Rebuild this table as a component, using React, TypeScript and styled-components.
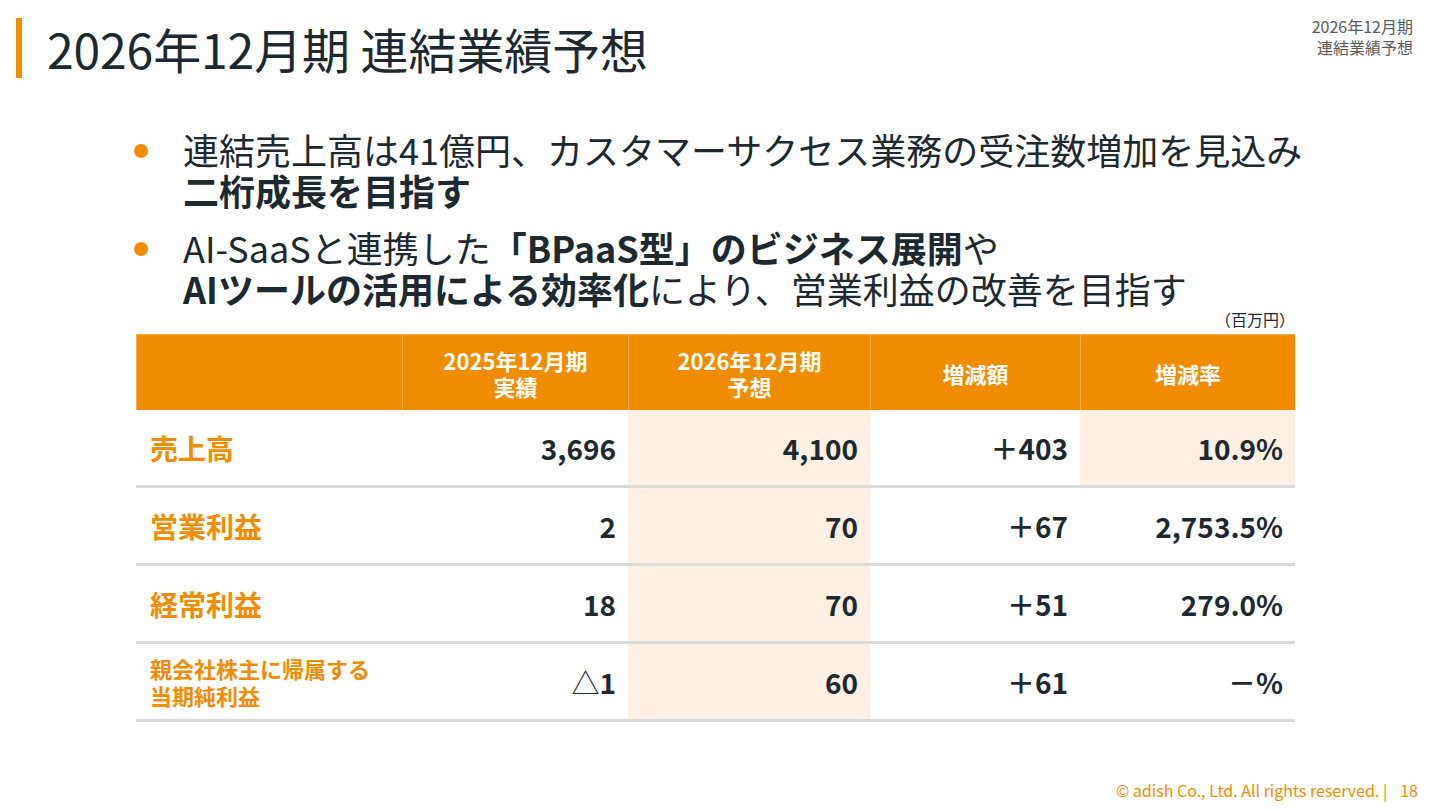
import React from "react";
import styled, { createGlobalStyle } from "styled-components";

const GlobalStyle = createGlobalStyle`
  html, body {
    margin: 0;
    padding: 0;
    background: #ffffff;
  }
  body {
    font-family: "Noto Sans CJK JP", "Noto Sans", sans-serif;
    color: #1d2931;
  }
  * { box-sizing: border-box; }
`;

const ORANGE = "#ef8c00";
const CREAM = "#fdefe1";
const INK = "#1d2931";

const Slide = styled.div`
  width: 1440px;
  height: 810px;
  display: flex;
  flex-direction: column;
  overflow: hidden;
  background: #ffffff;
`;

const Header = styled.header`
  display: flex;
  justify-content: space-between;
  align-items: flex-start;
  padding: 18px 27px 0 16px;
`;

const TitleGroup = styled.div`
  display: flex;
  align-items: center;
  gap: 25px;
`;

const AccentBar = styled.div`
  width: 6px;
  height: 60px;
  background: ${ORANGE};
`;

const Title = styled.h1`
  margin: 0;
  font-size: 48px;
  font-weight: 400;
  line-height: 60px;
  color: ${INK};
  letter-spacing: -0.1px;
`;

const Meta = styled.div`
  font-size: 16px;
  line-height: 21px;
  color: #5a5a5a;
  text-align: right;
  margin-top: -2px;
`;

const Bullets = styled.ul`
  list-style: none;
  margin: 51px 0 0 0;
  padding: 0 0 0 134px;
  display: flex;
  flex-direction: column;
  gap: 16px;
`;

const BulletItem = styled.li`
  display: grid;
  grid-template-columns: 49px 1fr;
  font-size: 36px;
  line-height: 41px;
  color: ${INK};
`;

const Dot = styled.span`
  width: 14px;
  height: 14px;
  border-radius: 50%;
  background: ${ORANGE};
  margin-top: 15px;
`;

const Strong = styled.strong`
  font-weight: 700;
`;

const TableWrap = styled.section`
  width: 1159px;
  margin: 1px 0 0 136px;
  display: flex;
  flex-direction: column;
`;

const Unit = styled.div`
  align-self: flex-end;
  font-size: 16px;
  line-height: 18px;
  color: ${INK};
  padding-right: 0;
  margin-bottom: 6px;
`;

const Grid = styled.div`
  display: grid;
  grid-template-columns: 266px 226px 242px 210px 215px;
`;

const HeadCell = styled.div`
  height: 76px;
  background: ${ORANGE};
  color: #ffffff;
  font-weight: 700;
  font-size: 22px;
  line-height: 26px;
  display: flex;
  align-items: center;
  justify-content: center;
  text-align: center;
  border-left: 1px solid rgba(255, 255, 255, 0.3);
  border-top: 1px solid rgba(255, 255, 255, 0.3);
`;

const LabelCell = styled.div<{ $small?: boolean }>`
  height: 78px;
  border-bottom: 3px solid #dadada;
  display: flex;
  align-items: center;
  padding: 0 14px;
  color: ${ORANGE};
  font-weight: 700;
  font-size: ${(p) => (p.$small ? "22px" : "28px")};
  line-height: ${(p) => (p.$small ? "27px" : "36px")};
`;

const ValueCell = styled.div<{ $hl?: boolean }>`
  height: 78px;
  border-bottom: 3px solid #dadada;
  background: ${(p) => (p.$hl ? CREAM : "#ffffff")};
  display: flex;
  align-items: center;
  justify-content: flex-end;
  padding: 0 12px 0 0;
  color: ${INK};
  font-weight: 700;
  font-size: 28px;
  line-height: 36px;
`;

const Triangle = styled.span`
  font-weight: 400;
`;

const Footer = styled.footer`
  margin-top: auto;
  display: flex;
  justify-content: flex-end;
  align-items: center;
  gap: 13px;
  padding: 0 22px 10px 0;
  color: ${ORANGE};
  font-size: 16px;
  line-height: 20px;
`;

const PageNo = styled.span``;

type Row = {
  label: React.ReactNode;
  small?: boolean;
  values: React.ReactNode[];
  rateHl?: boolean;
};

const rows: Row[] = [
  { label: "売上高", values: ["3,696", "4,100", "＋403", "10.9%"], rateHl: true },
  { label: "営業利益", values: ["2", "70", "＋67", "2,753.5%"] },
  { label: "経常利益", values: ["18", "70", "＋51", "279.0%"] },
  {
    label: (
      <>
        親会社株主に帰属する
        <br />
        当期純利益
      </>
    ),
    small: true,
    values: [
      <>
        <Triangle>△</Triangle>1
      </>,
      "60",
      "＋61",
      "－%",
    ],
  },
];

export default function App() {
  return (
    <>
      <GlobalStyle />
      <Slide>
        <Header>
          <TitleGroup>
            <AccentBar />
            <Title>2026年12月期 連結業績予想</Title>
          </TitleGroup>
          <Meta>
            2026年12月期
            <br />
            連結業績予想
          </Meta>
        </Header>

        <Bullets>
          <BulletItem>
            <Dot />
            <div>
              連結売上高は41億円、カスタマーサクセス業務の受注数増加を見込み
              <br />
              <Strong>二桁成長を目指す</Strong>
            </div>
          </BulletItem>
          <BulletItem>
            <Dot />
            <div>
              AI-SaaSと連携した<Strong>「BPaaS型」のビジネス展開</Strong>や
              <br />
              <Strong>AIツールの活用による効率化</Strong>により、営業利益の改善を目指す
            </div>
          </BulletItem>
        </Bullets>

        <TableWrap>
          <Unit>（百万円）</Unit>
          <Grid>
            <HeadCell />
            <HeadCell>
              2025年12月期
              <br />
              実績
            </HeadCell>
            <HeadCell>
              2026年12月期
              <br />
              予想
            </HeadCell>
            <HeadCell>増減額</HeadCell>
            <HeadCell>増減率</HeadCell>
            {rows.map((r, i) => (
              <React.Fragment key={i}>
                <LabelCell $small={r.small}>
                  <span>{r.label}</span>
                </LabelCell>
                <ValueCell>{r.values[0]}</ValueCell>
                <ValueCell $hl>{r.values[1]}</ValueCell>
                <ValueCell>{r.values[2]}</ValueCell>
                <ValueCell $hl={r.rateHl}>{r.values[3]}</ValueCell>
              </React.Fragment>
            ))}
          </Grid>
        </TableWrap>

        <Footer>
          <span>© adish Co., Ltd. All rights reserved. |</span>
          <PageNo>18</PageNo>
        </Footer>
      </Slide>
    </>
  );
}
